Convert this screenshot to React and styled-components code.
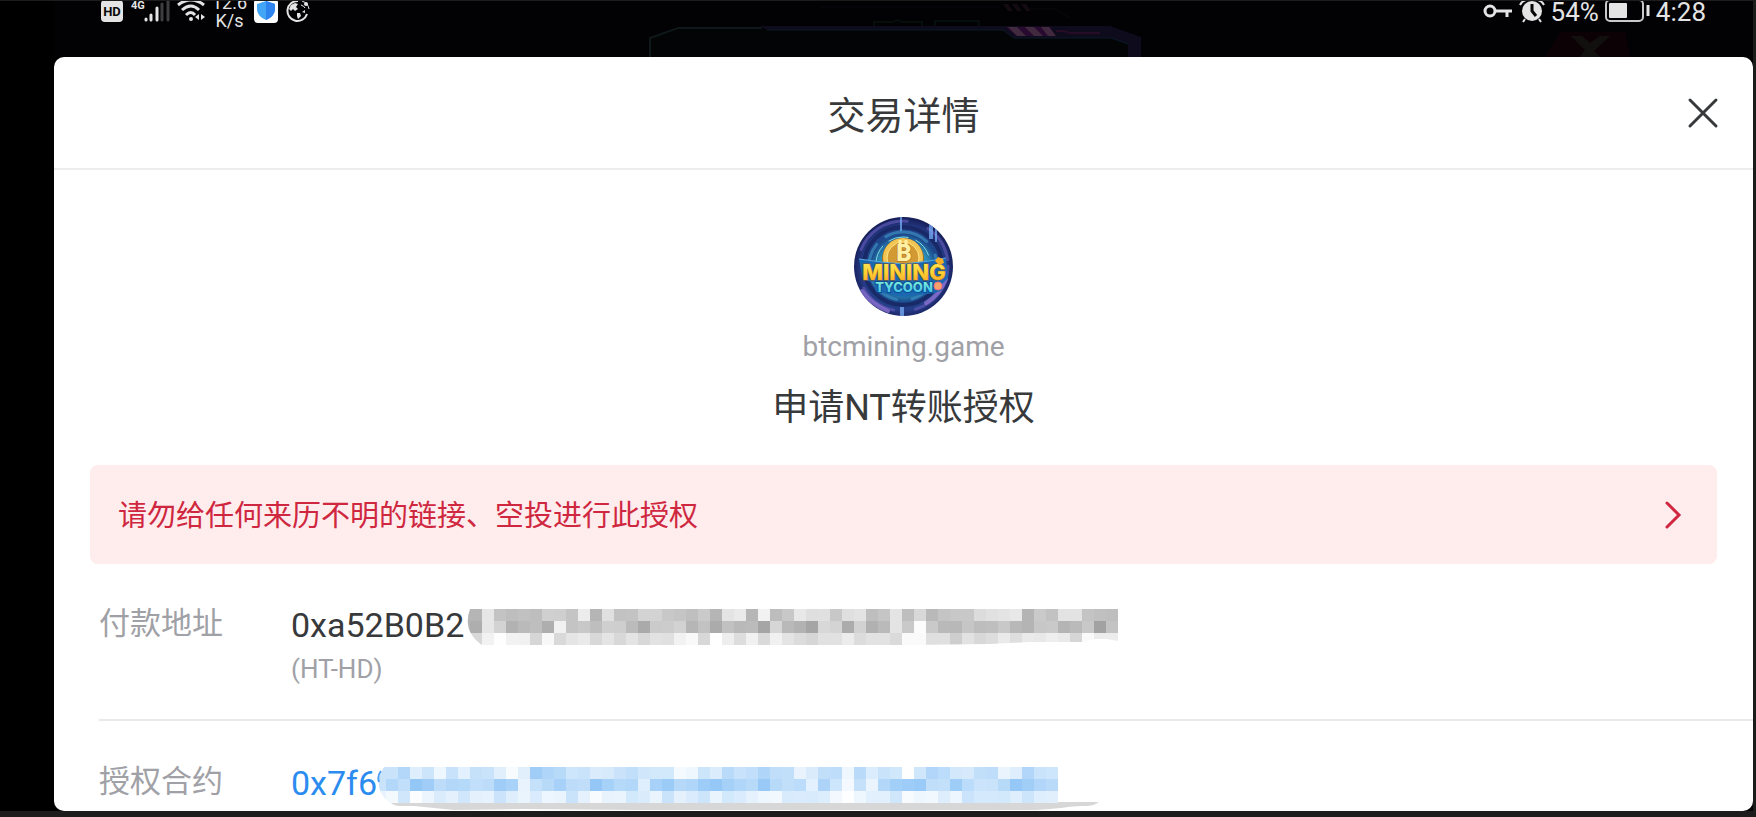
import React from "react";
import styled, { createGlobalStyle } from "styled-components";

const GlobalStyle = createGlobalStyle`
  * {
    box-sizing: border-box;
  }

  body {
    margin: 0;
    background-color: #000;
    font-family: Roboto, "Noto Sans CJK SC", sans-serif;
    color: #37393b;
  }
`;

const Screen = styled.div`
  min-height: 100vh;
  display: flex;
  flex-direction: column;
  background-color: #000;
  border: solid #1c1c1c;
  border-width: 1px 3px 6px 0;
`;

const StatusBar = styled.header`
  position: relative;
  height: 56px;
  padding: 0 47px 0 101px;
  display: flex;
  justify-content: space-between;
  overflow: hidden;
`;

const StatusGroup = styled.div`
  height: 20px;
  display: flex;
  align-items: center;
  gap: ${({ $gap }) => $gap}px;
  position: relative;
  color: #e4e4e4;

  svg {
    flex: none;
  }
`;

const Speed = styled.span`
  padding-top: 2px;
  font-size: 18px;
  line-height: 18px;
  width: 35px;
  text-align: center;
`;

const StatusText = styled.span`
  padding-top: 2px;
  font-size: 26px;
  line-height: 28px;
`;

const Backdrop = styled.svg`
  position: absolute;
  top: 0;
  left: 0;
  width: 100%;
  height: 56px;
`;

const Panel = styled.main`
  flex: 1;
  margin-left: 54px;
  background-color: #fff;
  border-radius: 10px;
`;

const PanelHeader = styled.div`
  height: 113px;
  padding: 0 34px;
  display: grid;
  grid-template-columns: 32px 1fr 32px;
  align-items: center;
  border-bottom: 2px solid #ececec;
`;

const Title = styled.h1`
  grid-column: 2;
  margin: 0;
  padding-top: 6px;
  font-size: 38px;
  line-height: 56px;
  font-weight: 400;
  text-align: center;
`;

const CloseButton = styled.button`
  width: 32px;
  height: 32px;
  padding: 0;
  border: 0;
  background: none;
  color: #37393b;
  cursor: pointer;

  svg {
    display: block;
  }
`;

const AppInfo = styled.section`
  padding-top: 47px;
  display: flex;
  flex-direction: column;
  align-items: center;
`;

const Site = styled.span`
  margin-top: 13px;
  font-size: 28px;
  line-height: 36px;
  color: #a0a1a6;
`;

const Request = styled.h2`
  margin: 17px 0 0;
  font-size: 36px;
  line-height: 52px;
  font-weight: 400;
`;

const Warning = styled.button`
  display: flex;
  justify-content: space-between;
  align-items: center;
  width: calc(100% - 72px);
  height: 99px;
  margin: 31px 36px 0;
  padding: 0 34px 0 28px;
  border: 0;
  border-radius: 8px;
  background-color: #ffecec;
  color: #cf2740;
  font-family: inherit;
  font-size: 29px;
  line-height: 40px;
  text-align: left;
  cursor: pointer;
`;

const WarningText = styled.span`
  padding-top: 3px;
`;

const Details = styled.dl`
  margin: 0;
  padding-left: 45px;
`;

const Row = styled.div`
  display: grid;
  grid-template-columns: 192px 1fr;
  padding: ${({ $last }) => ($last ? "38px 0 0" : "37px 0 32px")};
  border-bottom: ${({ $last }) => ($last ? "0" : "2px solid #e9e9e9")};
`;

const Label = styled.dt`
  font-size: 31px;
  line-height: 46px;
  color: #a0a1a6;
`;

const Value = styled.dd`
  margin: 0;
`;

const AddressLine = styled.div`
  display: flex;
  align-items: flex-start;
  font-size: 34px;
  line-height: 48px;

  svg {
    flex: none;
    display: block;
    margin-top: 8px;
  }
`;

const AddressLink = styled.a`
  color: #2b8cf0;
  text-decoration: none;
`;

const Note = styled.div`
  padding-top: 2px;
  font-size: 26px;
  line-height: 36px;
  color: #a0a1a6;
`;

const GREY_ROWS = [
  "b5e6c3bec1bed0cfc4ecb5e0c2c3d3d3c8c5bfcab5e4eab6f2bdc8e8dfe0c8dfe3bec5e4bed8b9c4c8c8dce1e4e8b4cac2e3e3c4c0be",
  "aee6d3b2babeaef1c4c8becfcebbaacbccd2b6c2abc1b9bba5d6b9b2a5d8d4acd2b1bae4c9fcc9b9b8c6bdbfc8b8b4c7c9b4bac8a2c3",
  "d8f2fef2f1d6f8d9e5ead8e4d8e4d8e2e0f2f9d8ffeeddf1daf1e4dcd6e1e1ecdce2e2dafafadfe0cee2d8ddeadeeae8eeead6faecec",
];

const BLUE_ROWS = [
  "c9c9b2decdeec8e3c5c9e1f7e19fafb8cec9dad6cac1d0d2d2f5efcddbb9c8c1afc0c2e8dac2bdefb9dbc9d1fed0b1bbd3d7c2bde9deb1c9ce",
  "c9b2c1939fbcb2b5c1bc9fa9e8c4b8a7bcc094a6b5b2dea79bb6b09c96a5b0b899b8c2bbe3adcef3c5e9b3a29c9ac0c39ebbcbc9b796a0b1b9",
  "e8f4cffbecdae4cfe4e6cbdfe9d9ede9c9e5f7e8e9d2dae9c9e4d9cde9d2d9e5eff1d8d9d8dcf2fdefe2e2cff7eff1ddedcbd4d4d2decddee1",
];

const CELL = 12;

const Cells = ({ rows, blue = false }) =>
  rows.map((row, y) =>
    row.match(/../g).map((code, x) => {
      const level = parseInt(code, 16);
      const shade = 255 - level;
      const fill = blue
        ? `rgb(${level}, ${Math.round(255 - shade * 0.52)}, ${Math.round(
            255 - shade * 0.08
          )})`
        : `rgb(${level}, ${level}, ${level})`;
      return (
        <rect
          key={`${x}-${y}`}
          x={x * CELL}
          y={y * CELL}
          width={CELL}
          height={CELL}
          fill={fill}
        />
      );
    })
  );

const PayerMask = () => (
  <svg
    width="654"
    height="36"
    viewBox="-6 0 654 36"
    shapeRendering="crispEdges"
    aria-hidden="true"
  >
    <clipPath id="payer-mask">
      <path d="M0 0H648V32L637 30L625 30L612 33H560L520 35L440 36H12Q-8 22 0 0Z" />
    </clipPath>
    <g clipPath="url(#payer-mask)">
      <rect x="-4" y="0" width="4" height="36" fill="#b5b5b5" />
      <Cells rows={GREY_ROWS} />
    </g>
  </svg>
);

const ContractMask = () => (
  <svg width="726" height="43" viewBox="3 0 726 43" aria-hidden="true">
    <path
      d="M16 35H725C718 41 708 38 694 40C680 42 672 42 662 43H260L150 42L80 43L40 39L25 39Q18 38 16 35Z"
      fill="#d7d7d7"
    />
    <clipPath id="contract-mask">
      <path d="M10 0H684V36H16Q-3 22 10 0Z" />
    </clipPath>
    <g clipPath="url(#contract-mask)" shapeRendering="crispEdges">
      <Cells rows={BLUE_ROWS} blue />
    </g>
    <path
      d="M7 4Q3 9 5 15"
      fill="none"
      stroke="#4d9ff3"
      strokeWidth="2"
    />
  </svg>
);

const GameLogo = () => (
  <svg width="99" height="99" viewBox="0 0 99 99" role="img" aria-label="Mining Tycoon">
    <defs>
      <radialGradient id="space" cx="50%" cy="52%" r="52%">
        <stop offset="0" stopColor="#49c6d6" />
        <stop offset="0.48" stopColor="#2b8fb8" />
        <stop offset="0.66" stopColor="#1c4a8c" />
        <stop offset="0.82" stopColor="#263a85" />
        <stop offset="1" stopColor="#141c55" />
      </radialGradient>
      <linearGradient id="gold" x1="0" y1="0" x2="0" y2="1">
        <stop offset="0" stopColor="#ffee62" />
        <stop offset="0.55" stopColor="#ffcf30" />
        <stop offset="1" stopColor="#f9992a" />
      </linearGradient>
      <linearGradient id="aqua" x1="0" y1="0" x2="0" y2="1">
        <stop offset="0" stopColor="#8cf5d0" />
        <stop offset="1" stopColor="#35b9f0" />
      </linearGradient>
      <clipPath id="logo-round">
        <circle cx="49.5" cy="49.5" r="49.5" />
      </clipPath>
    </defs>
    <g clipPath="url(#logo-round)">
      <rect width="99" height="99" fill="url(#space)" />
      <g fill="none" strokeLinecap="round">
        <circle cx="49" cy="49" r="45" stroke="#5d59b5" strokeWidth="3" strokeDasharray="58 22 38 40" opacity="0.7" />
        <circle cx="49" cy="49" r="39" stroke="#16245f" strokeWidth="4" opacity="0.8" />
        <circle cx="49" cy="49" r="34" stroke="#3c8fc0" strokeWidth="3" strokeDasharray="44 16 70 12" opacity="0.7" />
        <circle cx="49" cy="47" r="27" stroke="#83dce2" strokeWidth="1" strokeDasharray="20 8" />
        <path d="M72 86C82 80 88 72 92 62M8 74C15 84 24 90 34 94" stroke="#8971d0" strokeWidth="4" opacity="0.8" />
      </g>
      <path d="M46 0h2v14h-2zM75 2h4v20h-4zM81 12h2v13h-2zM46 90h4v9h-4z" fill="#7eb6ff" opacity="0.7" />
      <circle cx="49" cy="42" r="21" fill="#a66a1b" />
      <circle cx="49" cy="41" r="20" fill="#f3c552" />
      <circle cx="49" cy="41" r="16" fill="#d39a33" stroke="#ffe68a" strokeWidth="1" />
      <text x="50" y="44" textAnchor="middle" fontFamily="Roboto" fontWeight="900" fontSize="24" fill="#fff0a5" stroke="#a96618" strokeWidth="1" paintOrder="stroke">
        B
      </text>
      <path d="M46 23v5M52 23v5" stroke="#fff0a5" strokeWidth="3" />
      <path d="M5 42L27 45L50 47L75 44L92 41L94 61L88 67V73L81 76L50 80L22 75L20 65L9 63Z" fill="#1b68b0" />
      <path d="M5 42L27 45L50 47L75 44L92 41" fill="none" stroke="#55a9e0" strokeWidth="1" />
      <text x="50" y="63" textAnchor="middle" fontFamily="Inter" fontWeight="800" fontSize="22" fill="url(#gold)" stroke="#8a5320" strokeWidth="1" paintOrder="stroke">
        MINING
      </text>
      <text x="50" y="75" textAnchor="middle" fontFamily="Inter" fontWeight="800" fontSize="13" fill="url(#aqua)" stroke="#0c4d95" strokeWidth="2" paintOrder="stroke">
        TYCOON
      </text>
      <path d="M81 44L84 40L89 42L90 46L85 48Z" fill="#f8ad23" />
      <circle cx="84" cy="69" r="4" fill="#f6a16b" stroke="#ef6f80" strokeWidth="1" />
    </g>
  </svg>
);

const GameBackdrop = () => (
  <Backdrop viewBox="0 0 1753 56" preserveAspectRatio="xMidYMin slice" aria-hidden="true">
    <rect x="54" width="1699" height="56" fill="#020104" />
    <path d="M650 56V37L678 27H762L768 29H1004L1014 37H1112L1130 43V56Z" fill="#030405" />
    <path d="M650 56V37L678 27H762" fill="none" stroke="#0e1719" strokeWidth="2" />
    <path d="M760 25H1110L1141 36V56H1128V43L1111 37H1014L1003 29H767Z" fill="#0d0b1c" />
    <path d="M767 29H1003L1014 37H1111L1128 43" fill="none" stroke="#0b1a27" />
    <path d="M1006 26H1050L1056 35H1016Z" fill="#280a30" />
    <path d="M1008 26h9l9 9h-9zM1025 26h9l9 9h-9zM1041 26h8l7 9h-8z" fill="#412a3d" />
    <path d="M1056 30H1064L1070 32H1100" fill="none" stroke="#270c26" strokeWidth="2" />
    <path d="M1003 3h5l5 7h-5zM1012 3h5l5 7h-5zM1021 3h5l5 7h-5z" fill="#130b11" />
    <path d="M820 6H1000M1030 8H1055L1070 17" fill="none" stroke="#08080d" />
    <path d="M874 25V21H893L898 19L902 21H922V25M935 25V20H979V25" fill="none" stroke="#060e0a" strokeWidth="2" />
    <path d="M1560 31H1625L1630 56H1545Z" fill="#0c0205" />
    <path d="M1571 35H1582L1590 42L1600 35H1610L1594 50L1600 56H1580L1585 49Z" fill="#12100e" />
  </Backdrop>
);

const LeftStatus = () => (
  <StatusGroup $gap={7}>
    <svg width="22" height="22" viewBox="0 0 22 22" role="img" aria-label="HD">
      <rect width="22" height="22" rx="4" fill="#e4e4e4" />
      <text x="11" y="16" textAnchor="middle" fontFamily="Roboto" fontSize="13" fontWeight="700" fill="#0a0a0a">
        HD
      </text>
    </svg>
    <svg width="40" height="22" viewBox="0 0 40 22" role="img" aria-label="4G">
      <text x="1" y="9" fontFamily="Roboto" fontSize="11" fontWeight="700" fill="#e4e4e4">
        4G
      </text>
      <g strokeWidth="3" strokeLinecap="round">
        <path d="M16 19V20M21 15V20M27 8V20" stroke="#e4e4e4" />
        <path d="M32 4V20M38 0V20" stroke="#3e3e3e" />
      </g>
    </svg>
    <svg width="28" height="22" viewBox="0 0 28 22" fill="none" stroke="#e4e4e4" strokeWidth="3" aria-hidden="true">
      <path d="M1 5Q14 -5 27 5M5 10Q14 2 22 10M9 15Q14 10 18 15" />
      <circle cx="14" cy="19" r="2" fill="#e4e4e4" stroke="none" />
      <path d="M22 14V20L18 17ZM24 14V20L28 17Z" fill="#e4e4e4" stroke="none" />
    </svg>
    <Speed>
      12.6
      <br />
      K/s
    </Speed>
    <svg width="24" height="24" viewBox="0 0 24 24" aria-hidden="true">
      <rect width="24" height="24" rx="4" fill="#fff" />
      <path d="M12 2L21 5V11Q20 18 12 21Q4 18 3 11V5Z" fill="#42a5f5" />
      <path d="M12 2L21 5V11Q20 18 12 21Z" fill="#2f83ef" />
    </svg>
    <svg width="25" height="24" viewBox="0 0 25 24" fill="none" aria-hidden="true">
      <path d="M13 2A10 10 0 1 0 22 15" stroke="#e4e4e4" strokeWidth="2" />
      <path d="M6 6L10 4L13 5L11 8L13 10L10 12L8 10L6 12L4 10ZM12 14L15 14L16 17L13 20L12 17ZM17 13L20 11L20 14Z" fill="#e4e4e4" />
      <path d="M17 2Q23 4 24 10M16 6Q19 7 20 9" stroke="#e4e4e4" strokeWidth="1" />
      <circle cx="21" cy="5" r="2" fill="#e4e4e4" />
    </svg>
  </StatusGroup>
);

const RightStatus = () => (
  <StatusGroup $gap={6}>
    <svg width="30" height="18" viewBox="0 0 30 18" fill="none" stroke="#e4e4e4" strokeWidth="3" aria-hidden="true">
      <circle cx="7" cy="9" r="5" />
      <path d="M12 9H29M24 9V15" />
    </svg>
    <svg width="26" height="24" viewBox="0 0 26 24" aria-hidden="true">
      <circle cx="13" cy="12" r="10" fill="#e4e4e4" />
      <path d="M1 6Q3 2 7 1M25 6Q23 2 19 1M6 20L4 23M20 20L22 23" stroke="#e4e4e4" strokeWidth="2" fill="none" />
      <path d="M13 5V12L17 17" stroke="#050505" strokeWidth="3" fill="none" />
    </svg>
    <StatusText>54%</StatusText>
    <svg width="45" height="24" viewBox="0 0 45 24" aria-hidden="true">
      <rect x="1" y="1" width="37" height="21" rx="4" fill="none" stroke="#c9c9c9" strokeWidth="2" />
      <rect x="4" y="4" width="18" height="15" rx="1" fill="#e4e4e4" />
      <path d="M43 6V17" stroke="#e4e4e4" strokeWidth="3" />
    </svg>
    <StatusText>4:28</StatusText>
  </StatusGroup>
);

const App = () => (
  <>
    <GlobalStyle />
    <Screen>
      <StatusBar>
        <GameBackdrop />
        <LeftStatus />
        <RightStatus />
      </StatusBar>
      <Panel>
        <PanelHeader>
          <Title>交易详情</Title>
          <CloseButton type="button" aria-label="关闭">
            <svg width="32" height="32" viewBox="0 0 32 32" stroke="currentColor" strokeWidth="3" strokeLinecap="round">
              <path d="M3 3L29 29M29 3L3 29" />
            </svg>
          </CloseButton>
        </PanelHeader>
        <AppInfo>
          <GameLogo />
          <Site>btcmining.game</Site>
          <Request>申请NT转账授权</Request>
        </AppInfo>
        <Warning type="button">
          <WarningText>请勿给任何来历不明的链接、空投进行此授权</WarningText>
          <svg width="20" height="30" viewBox="0 0 20 30" fill="none" stroke="currentColor" strokeWidth="3" strokeLinecap="round" aria-hidden="true">
            <path d="M4 3L16 15L4 27" />
          </svg>
        </Warning>
        <Details>
          <Row>
            <Label>付款地址</Label>
            <Value>
              <AddressLine>
                0xa52B0B2
                <PayerMask />
              </AddressLine>
              <Note>(HT-HD)</Note>
            </Value>
          </Row>
          <Row $last>
            <Label>授权合约</Label>
            <Value>
              <AddressLine>
                <AddressLink href="#contract">0x7f6</AddressLink>
                <ContractMask />
              </AddressLine>
            </Value>
          </Row>
        </Details>
      </Panel>
    </Screen>
  </>
);

export default App;
